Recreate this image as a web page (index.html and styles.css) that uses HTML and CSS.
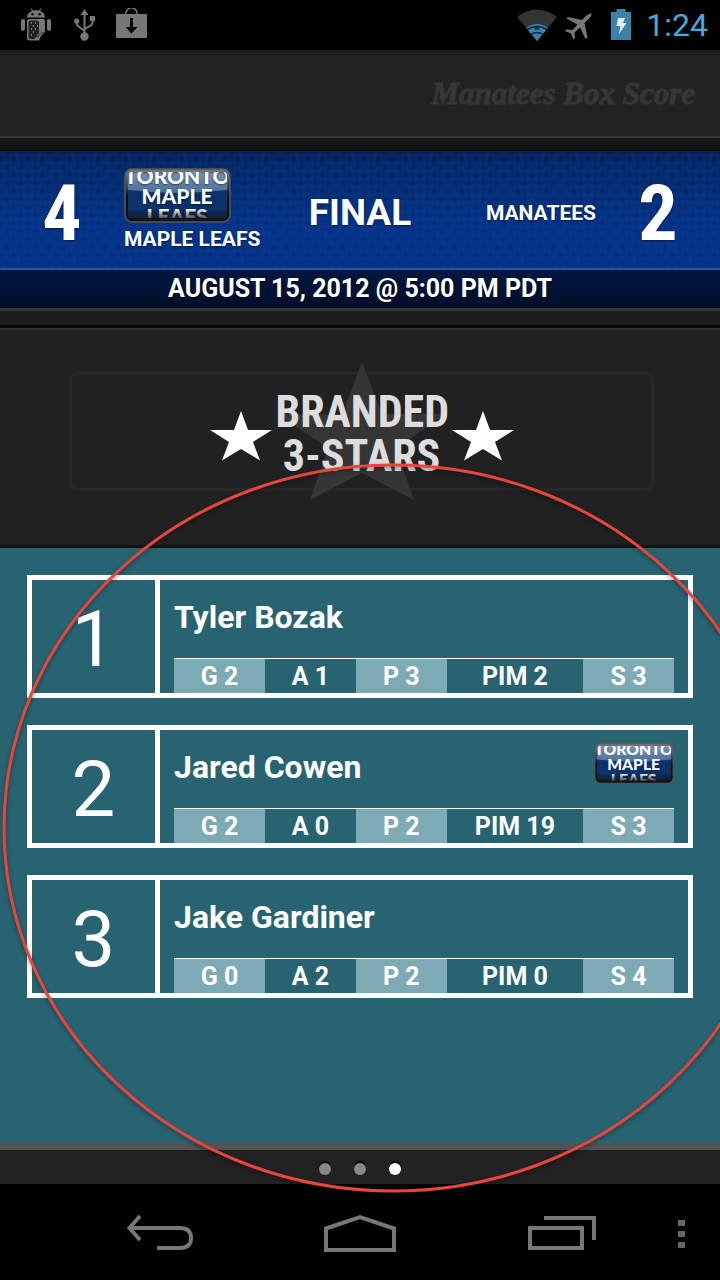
FILE: index.html
```html
<!DOCTYPE html>
<html lang="en">
<head>
<meta charset="utf-8">
<meta name="viewport" content="width=device-width, initial-scale=1">
<title>Manatees Box Score</title>
<link rel="stylesheet" href="styles.css">
</head>
<body>
<svg class="defs" width="0" height="0" aria-hidden="true">
  <defs>
    <linearGradient id="rim" x1="0" y1="0" x2="0" y2="1">
      <stop offset="0" stop-color="#77797b"/><stop offset=".35" stop-color="#3c4046"/><stop offset=".5" stop-color="#0b0d12"/><stop offset="1" stop-color="#141414"/>
    </linearGradient>
    <linearGradient id="gloss" x1="0" y1="0" x2="0" y2="1">
      <stop offset="0" stop-color="#7d93b0"/><stop offset="1" stop-color="#48709d"/>
    </linearGradient>
    <linearGradient id="shade" x1="0" y1="0" x2="0" y2="1">
      <stop offset="0" stop-color="#000" stop-opacity="0"/><stop offset="1" stop-color="#222" stop-opacity=".9"/>
    </linearGradient>
    <clipPath id="plate"><rect x="4" y="4" width="99" height="46" rx="4"/></clipPath>
    <symbol id="leafs" viewBox="0 0 107 55">
      <rect x="1" y="1" width="105" height="53" rx="7" fill="url(#rim)" stroke="#55585c" stroke-width="1.5"/>
      <g clip-path="url(#plate)">
        <rect x="3" y="3" width="101" height="49" fill="#0b326b"/>
        <path d="M3 3H104V22Q54 28 3 22Z" fill="url(#gloss)"/>
        <g fill="#fff" font-family="Lato, sans-serif" font-weight="900" text-anchor="middle">
          <text x="53" y="16" font-size="21">TORONTO</text>
          <text x="53" y="36" font-size="21">MAPLE</text>
          <text x="53" y="56" font-size="21">LEAFS</text>
        </g>
        <rect x="3" y="41" width="101" height="11" fill="url(#shade)"/>
      </g>
    </symbol>
    <symbol id="star" viewBox="0 0 62 50">
      <path d="M31 0L38 19H62L43 31L50 49.500L31 38L12 49.500L19 31L0 19H24Z" fill="#fff"/>
    </symbol>
  </defs>
</svg>

<div class="screen">
  <div class="status">
    <svg width="31" height="34" viewBox="0 0 31 34" fill="#777" aria-label="Debugging">
      <path d="M6 9.500C6 6 8.500 4 11 3L9.500.8L10.300.3L12.200 2.600Q15 1.800 18 2.600L19.800.3L20.600.8L19.200 3C22 4 24 6 24 9.500Z"/>
      <circle cx="11.500" cy="6.200" r="1.200" fill="#000"/><circle cx="18.700" cy="6.200" r="1.200" fill="#000"/>
      <rect x="0" y="11" width="4" height="12" rx="2"/><rect x="26" y="11" width="4" height="12" rx="2"/>
      <path d="M8 11H22Q24 11 24 13V24L20 28L18 32.500H9Q6 32.500 6 30V13Q6 11 8 11Z"/>
      <path d="M9.500 12.500H16Q18 12.500 18 15V25L13 31H9.500Q7.500 31 7.500 29V14.500Q7.500 12.500 9.500 12.500Z" fill="#222"/>
      <path d="M10 15h1M14 15h1M12 18h1M16 18h1M10 21h1M14 21h1M12 24h1M10 27h1" stroke="#999" stroke-width="1.500"/>
      <path d="M13 31L16 28L17 29L20 25L23 24" stroke="#333" fill="none"/>
    </svg>
    <svg width="22" height="34" viewBox="0 0 22 34" aria-label="USB connected">
      <g fill="none" stroke="#777" stroke-width="2"><path d="M10.500 5V28M10.500 23L4 18Q2.500 17 2.500 13M10.500 21L17 17.500Q19 16 19 10"/></g>
      <g fill="#777"><path d="M10.500 1L14.500 7H6.500Z"/><circle cx="2.700" cy="13" r="2.600"/><rect x="16" y="8" width="5" height="5"/><circle cx="10.500" cy="28.500" r="4.200"/></g>
    </svg>
    <svg width="31" height="34" viewBox="0 0 31 34" aria-label="Download complete">
      <path d="M9.500 8C9.500-3 21.500-3 21.500 8" fill="none" stroke="#777" stroke-width="1.500"/>
      <rect x="0" y="6" width="31" height="24" rx="1" fill="#777"/>
      <path d="M14 10H17V19H21.500L15.500 25.500L9.500 19H14Z" fill="#000"/>
    </svg>
    <span class="spacer"></span>
    <svg width="40" height="34" viewBox="0 0 40 34" aria-label="Wi-Fi">
      <path d="M0 9Q20-6 40 9L20 33Z" fill="#333"/>
      <path d="M9 20Q20 12 31 20L20 33Z" fill="#3882aa"/>
      <path d="M9 22Q20 15 31 22M13 27Q20 22 27 27" fill="none" stroke="#0b1a24" stroke-width="1.500"/>
      <path d="M17 19H23L22 22H18Z" fill="#1c3f53"/>
    </svg>
    <svg width="28" height="34" viewBox="0 0 28 34" aria-label="Airplane mode">
      <path d="M26.500 5.500Q24 5 21 8L17 12L3 9L1.500 10.500L12.500 16.500L7.500 22L1.500 21.500L0 23L6 25.500L8.500 31.500L10 30L9.500 24.500L15 19.500L20.500 31L22.500 29.500L19.500 15L24 10.500Q27 7.500 26.500 5.500Z" fill="#777"/>
    </svg>
    <svg class="battery" width="20" height="34" viewBox="0 0 20 34" aria-label="Battery charging">
      <path d="M0 4H5.500V1H14.500V4H20V32H0Z" fill="#3a82a8"/>
      <path d="M7 10H14L12 15H15.500L8 26L9.500 18H5.500Z" fill="#e4eef3"/>
    </svg>
    <time>1:24</time>
  </div>

  <header class="titlebar"><h1>Manatees Box Score</h1></header>

  <section class="score" aria-label="Final score">
    <div class="score-row">
      <strong class="points">4</strong>
      <div class="team home"><svg class="logo-lg" role="img" aria-label="Toronto Maple Leafs"><use href="#leafs"/></svg><span>MAPLE LEAFS</span></div>
      <div class="state">FINAL</div>
      <div class="team away"><span>MANATEES</span></div>
      <strong class="points">2</strong>
    </div>
    <p class="date">AUGUST 15, 2012 @ 5:00 PM PDT</p>
  </section>

  <div class="seam"></div>

  <section class="banner">
    <div class="frame">
      <svg class="ghost" width="170" height="138" viewBox="0 0 170 138" aria-hidden="true"><path d="M85 0L105 52H170L119 86L137 138L85 111L33 138L51 86L0 52H65Z" fill="#353535"/></svg>
      <svg class="star"><use href="#star"/></svg>
      <h2>BRANDED<br>3-STARS</h2>
      <svg class="star"><use href="#star"/></svg>
    </div>
  </section>

  <main>
    <ol class="players">
      <li class="player">
        <div class="rank">1</div>
        <div class="info">
          <div class="who"><h3>Tyler Bozak</h3></div>
          <ul class="stats"><li>G 2</li><li>A 1</li><li>P 3</li><li>PIM 2</li><li>S 3</li></ul>
        </div>
      </li>
      <li class="player">
        <div class="rank">2</div>
        <div class="info">
          <div class="who"><h3>Jared Cowen</h3><svg class="logo-sm" role="img" aria-label="Toronto Maple Leafs"><use href="#leafs"/></svg></div>
          <ul class="stats"><li>G 2</li><li>A 0</li><li>P 2</li><li>PIM 19</li><li>S 3</li></ul>
        </div>
      </li>
      <li class="player">
        <div class="rank">3</div>
        <div class="info">
          <div class="who"><h3>Jake Gardiner</h3></div>
          <ul class="stats"><li>G 0</li><li>A 2</li><li>P 2</li><li>PIM 0</li><li>S 4</li></ul>
        </div>
      </li>
    </ol>
  </main>

  <div class="pager">
    <button aria-label="Page 1"></button>
    <button aria-label="Page 2"></button>
    <button class="current" aria-label="Page 3" aria-current="true"></button>
  </div>

  <nav class="navbar">
    <button aria-label="Back"><svg width="68" height="40" viewBox="0 0 68 40" fill="none" stroke="#777" stroke-width="4"><path d="M4 14H54Q65 14 65 24T54 34H31"/><path d="M14 2L3.500 14L14 26"/></svg></button>
    <button aria-label="Home"><svg width="72" height="40" viewBox="0 0 72 40" fill="none" stroke="#777" stroke-width="4"><path d="M2 14.500L36 3L70 14.500V36H2Z"/></svg></button>
    <button aria-label="Recent apps"><svg width="68" height="40" viewBox="0 0 68 40" fill="none" stroke="#777" stroke-width="4"><path d="M4 14H56V34H4ZM18 4H68V26" /></svg></button>
    <button class="more" aria-label="More options"><svg width="7" height="40" viewBox="0 0 7 40" fill="#666"><path d="M0 6H7V12H0ZM0 17H7V23H0ZM0 28H7V34H0Z"/></svg></button>
  </nav>

  <svg class="callout" width="786" height="740" viewBox="0 0 786 740" aria-hidden="true"><ellipse cx="392" cy="368" rx="389" ry="363" fill="none" stroke="#e8463c" stroke-width="3"/></svg>
</div>
</body>
</html>
```
FILE: styles.css
```css
* { box-sizing: border-box; }
body, h1, h2, h3, p, ol, ul { margin: 0; padding: 0; }
ol, ul { list-style: none; }
button { border: 0; padding: 0; background: none; }
svg { display: block; flex: none; }

body {
  background: #000;
  color: #fff;
  font-family: Roboto, "Noto Sans", sans-serif;
}

.defs { position: absolute; }

.screen {
  position: relative;
  display: flex;
  flex-direction: column;
  min-height: 100vh;
  overflow: hidden;
  background: #212121;
}

/* System status bar */
.status {
  display: flex;
  align-items: center;
  gap: 8px;
  height: 50px;
  padding: 0 12px 0 21px;
  background: #000;
}
.status svg:nth-child(2) { margin-left: 14px; }
.status svg:nth-child(3) { margin-left: 12px; }
.status .spacer { flex: 1; }
.status .battery { margin: 0 7px 0 10px; }
.status time { color: #47a8de; font-size: 32px; line-height: 52px; }

/* Title */
.titlebar {
  display: flex;
  align-items: center;
  justify-content: flex-end;
  height: 101px;
  padding: 0 25px 12px 0;
  border-bottom: 1px solid #000;
  background: linear-gradient(#181818 0, #232323 6px, #222 86px, #363636 86px, #363636 88px, #181818 88px, #101010 100px);
}
.titlebar h1 {
  color: #363636;
  font: italic bold 31px/36px "Liberation Serif", serif;
  -webkit-text-stroke: 1px #363636;
}

/* Score panel */
.score {
  border-bottom: 3px solid #353535;
  text-shadow: 0 1px 2px #0008;
}
.score-row {
  display: grid;
  grid-template-columns: 124px 1fr auto 1fr 124px;
  align-items: center;
  height: 117px;
  background:
    radial-gradient(circle, #1a50b030 5px, #0000 7px) 0 0 / 14px 16px,
    radial-gradient(circle, #1a50b030 5px, #0000 7px) 7px 8px / 14px 16px,
    linear-gradient(#001a44 0, #002259 14px, #002e82 80px, #002c7c);
}
.points {
  padding-top: 8px;
  font-family: "Roboto Condensed", Roboto, sans-serif;
  font-size: 78px;
  line-height: 80px;
  text-align: center;
}
.team { font-size: 21px; font-weight: bold; line-height: 24px; }
.away { padding-top: 6px; text-align: right; }
.logo-lg { width: 107px; height: 55px; margin-bottom: 4px; }
.state { font-size: 37px; font-weight: bold; line-height: 44px; padding-top: 6px; }
.date {
  height: 40px;
  border-top: 2px solid #2c5298;
  background: linear-gradient(#001742, #000e28);
  font-size: 25px;
  font-weight: bold;
  line-height: 38px;
  text-align: center;
}
.seam { height: 19px; background: linear-gradient(#1c1c1c 14px, #080808 14px, #080808 17px, #353535 17px); }

/* Sponsor banner */
.banner {
  height: 218px;
  padding: 42px 66px 0 69px;
  border-bottom: 3px solid #111;
}
.frame {
  position: relative;
  display: flex;
  align-items: center;
  justify-content: center;
  gap: 4px;
  height: 119px;
  border: 3px solid #272727;
  border-radius: 8px;
}
.frame > * { position: relative; }
.frame .ghost { position: absolute; left: calc(50% - 85px); top: -13px; }
.frame h2 {
  width: 172px;
  padding-top: 4px;
  color: #ddd;
  font: bold 44px/44px "Roboto Condensed", "Liberation Sans Narrow", "Liberation Sans", sans-serif;
  text-align: center;
}
.star { width: 62px; height: 50px; margin-top: 8px; }

/* Players */
main { flex: 1; padding: 27px; background: #286372; }
.players { display: flex; flex-direction: column; gap: 27px; }
.player { display: flex; height: 123px; border: 5px solid #fff; }
.rank {
  width: 128px;
  border-right: 5px solid #fff;
  font-size: 78px;
  line-height: 120px;
  text-align: center;
}
.info { flex: 1; display: flex; flex-direction: column; padding: 0 14px; }
.who { flex: 1; display: flex; align-items: center; justify-content: space-between; padding-bottom: 4px; }
.who h3 { font-size: 32px; line-height: 40px; }
.logo-sm { align-self: flex-start; width: 80px; height: 41px; margin-top: 13px; }
.stats {
  display: grid;
  grid-template-columns: 2fr 2fr 2fr 3fr 2fr;
  height: 35px;
  border-top: 1px solid #fff;
}
.stats li { padding-top: 2px; font-size: 25px; font-weight: bold; line-height: 32px; text-align: center; }
.stats li:nth-child(odd) { background: #7eaab5; }

/* Pager dots */
.pager {
  display: flex;
  align-items: center;
  justify-content: center;
  gap: 23px;
  height: 41px;
  padding-top: 3px;
  border-top: 7px solid #525252;
  background: #222;
}
.pager button { width: 12px; height: 12px; border-radius: 50%; background: #888; box-shadow: 0 -2px 1px #0a0a0a; }
.pager .current { background: #fff; }

/* System navigation */
.navbar {
  display: grid;
  grid-template-columns: 1fr 1fr 1fr 60px;
  align-items: center;
  height: 96px;
  padding: 4px 0 0 60px;
  background: #000;
}
.navbar button { display: flex; justify-content: center; }
.navbar svg { overflow: visible; }
.navbar .more { padding-right: 18px; }

/* Hand-drawn circle over the player list */
.callout {
  position: absolute;
  left: 1px;
  top: 460px;
  filter: drop-shadow(0 2px 2px #0006);
  pointer-events: none;
}
```
